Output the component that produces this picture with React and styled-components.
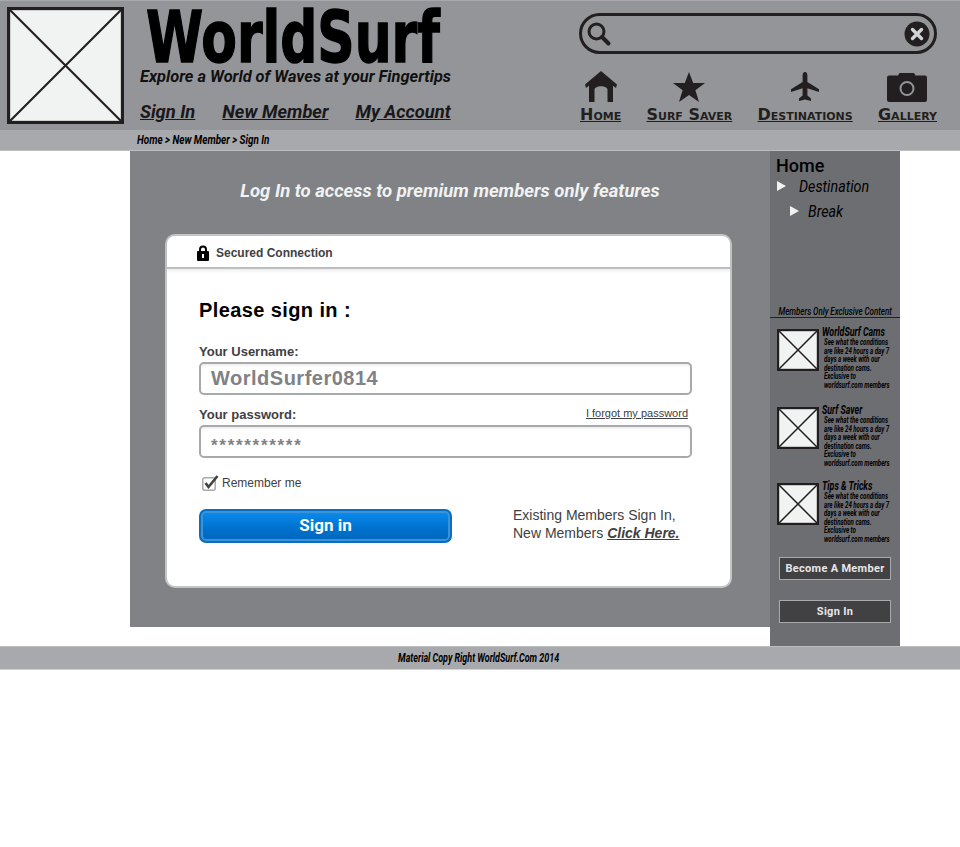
import React from "react";
import styled, { createGlobalStyle } from "styled-components";

const GlobalStyle = createGlobalStyle`
  html, body { margin: 0; padding: 0; background: #fff; }
  body { font-family: "Liberation Sans", Arial, sans-serif; }
`;

const Header = styled.header`
  height: 130px;
  background: #939598;
  border-top: 1px solid #a7a9ac;
  box-sizing: border-box;
  display: flex;
  padding: 6px 23px 0 7px;
`;

const Frame = styled.svg`
  display: block;
  flex: none;
  width: ${(p) => p.size}px;
  height: ${(p) => p.size}px;
`;

const Brand = styled.div`
  margin-left: 16px;
  width: 320px;
`;

const Logo = styled.div`
  font-family: "DejaVu Sans", sans-serif;
  font-weight: 700;
  font-size: 71px;
  line-height: 58px;
  height: 58px;
  margin: 2px 0 0 6px;
  color: #000;
  -webkit-text-stroke: 1.5px #000;
  transform: scaleX(0.73);
  transform-origin: left center;
  white-space: nowrap;
`;

const Tagline = styled.div`
  font-family: Roboto, sans-serif;
  font-style: italic;
  font-weight: 700;
  font-size: 16.4px;
  line-height: 20px;
  color: #111;
  white-space: nowrap;
`;

const TopLinks = styled.nav`
  display: flex;
  gap: 27px;
  margin-top: 13px;
`;

const TopLink = styled.a`
  font-family: Roboto, sans-serif;
  font-style: italic;
  font-weight: 700;
  font-size: 18.3px;
  line-height: 24px;
  color: #1a1718;
  text-decoration: underline;
  white-space: nowrap;
`;

const RightSide = styled.div`
  margin-left: auto;
  width: 358px;
`;

const Search = styled.div`
  height: 41px;
  margin-top: 6px;
  box-sizing: border-box;
  border: 3px solid #231f20;
  border-radius: 21px;
  display: flex;
  align-items: center;
  justify-content: space-between;
  padding: 0 4px;
`;

const IconNav = styled.nav`
  display: flex;
  justify-content: space-between;
  margin-top: 16px;
  padding-left: 1px;
`;

const IconLink = styled.a`
  display: flex;
  flex-direction: column;
  align-items: center;
  color: #231f20;
`;

const IconBox = styled.span`
  height: 32px;
  display: flex;
  align-items: flex-end;
`;

const IconLabel = styled.span`
  font-family: "DejaVu Sans", sans-serif;
  font-variant: small-caps;
  font-weight: 700;
  font-size: 16px;
  line-height: 18px;
  margin-top: 4px;
  text-decoration: underline;
  text-underline-offset: 1px;
  white-space: nowrap;
`;

const Crumbs = styled.div`
  height: 21px;
  box-sizing: border-box;
  background: #a7a9ac;
  border-bottom: 1px solid #bcbec0;
  padding-left: 137px;
  font-family: Roboto, sans-serif;
  font-style: italic;
  font-weight: 700;
  font-size: 12.5px;
  line-height: 20px;
  color: #000;
`;

const Squeeze = styled.span`
  display: inline-block;
  transform: scaleX(${(p) => p.x});
  transform-origin: ${(p) => p.origin || "left"} center;
  white-space: pre;
`;

const Content = styled.div`
  display: flex;
  padding-left: 130px;
`;

const Main = styled.main`
  width: 640px;
  height: 476px;
  background: #808285;
  box-sizing: border-box;
  padding: 28px 38px 0 35px;
`;

const MainTitle = styled.h1`
  margin: 0;
  text-align: center;
  font-family: Roboto, sans-serif;
  font-style: italic;
  font-weight: 700;
  font-size: 18.5px;
  line-height: 25px;
  color: #f1f2f2;
  padding-left: 3px;
`;

const Card = styled.section`
  margin-top: 30px;
  height: 354px;
  box-sizing: border-box;
  background: #fff;
  border: 2px solid #c4c5c7;
  border-radius: 10px;
`;

const CardHead = styled.div`
  height: 33px;
  box-sizing: border-box;
  border-bottom: 2px solid #bcbec0;
  box-shadow: 0 2px 3px rgba(0, 0, 0, 0.08);
  display: flex;
  align-items: center;
  gap: 7px;
  padding: 3px 0 0 30px;
  font-weight: 700;
  font-size: 12px;
  color: #414042;
`;

const CardBody = styled.div`
  padding: 29px 38px 0 32px;
`;

const SignTitle = styled.h2`
  margin: 0;
  font-size: 20px;
  line-height: 24px;
  letter-spacing: 0.4px;
  color: #000;
`;

const FieldHead = styled.div`
  display: flex;
  justify-content: space-between;
  align-items: flex-end;
  margin-top: ${(p) => p.gap}px;
  height: 17px;
  font-weight: 700;
  font-size: 13px;
  line-height: 17px;
  color: #414042;
`;

const Forgot = styled.a`
  font-weight: 400;
  font-size: 11px;
  color: #414042;
  text-decoration: underline;
  margin-right: 4px;
  padding-bottom: 1px;
`;

const Field = styled.div`
  height: 33px;
  box-sizing: border-box;
  margin-top: 2px;
  border: 2px solid #a7a9ac;
  border-radius: 5px;
  box-shadow: inset 0 2px 2px rgba(0, 0, 0, 0.06);
  padding-left: 10px;
  display: flex;
  align-items: center;
  font-weight: 700;
  font-size: 20px;
  letter-spacing: 0.5px;
  color: #808285;
`;

const Stars = styled.span`
  font-weight: 700;
  font-size: 17px;
  letter-spacing: 1.7px;
  padding-top: 8px;
`;

const Remember = styled.div`
  display: flex;
  align-items: center;
  gap: 3px;
  margin: 15px 0 0 3px;
  font-size: 12px;
  line-height: 20px;
  color: #414042;
`;

const ActionRow = styled.div`
  display: flex;
  margin-top: 16px;
`;

const BlueButton = styled.button`
  width: 253px;
  height: 34px;
  padding: 0 0 3px;
  box-sizing: border-box;
  border: 2px solid #0a6fc2;
  border-radius: 7px;
  background: linear-gradient(#0a8df0 0%, #0070cc 60%, #0067bd 100%);
  box-shadow: inset 0 0 0 2px #3d93d8;
  color: #fff;
  font-family: Roboto, sans-serif;
  font-weight: 700;
  font-size: 17px;
`;

const Existing = styled.p`
  margin: -3px 0 0 61px;
  font-size: 14px;
  line-height: 18px;
  color: #414042;
  white-space: nowrap;
`;

const ClickHere = styled.a`
  font-weight: 700;
  font-style: italic;
  text-decoration: underline;
`;

const Side = styled.aside`
  width: 130px;
  height: 495px;
  background: #6d6e71;
  padding-top: 6px;
  box-sizing: border-box;
`;

const SideHome = styled.div`
  font-family: Roboto, sans-serif;
  font-weight: 500;
  font-size: 18px;
  line-height: 18px;
  margin-bottom: -2px;
  color: #000;
  padding-left: 6px;
`;

const SideLink = styled.div`
  display: flex;
  align-items: center;
  height: 25px;
  padding-left: ${(p) => p.indent}px;
  font-family: Roboto, sans-serif;
  font-style: italic;
  font-size: 17px;
  color: #000;
`;

const Triangle = styled.span`
  width: 0;
  height: 0;
  flex: none;
  margin-right: ${(p) => p.space}px;
  border-left: 9px solid #f1f2f2;
  border-top: 5px solid transparent;
  border-bottom: 5px solid transparent;
`;

const MembersHead = styled.div`
  margin-top: 75px;
  height: 13px;
  padding-top: 6px;
  border-bottom: 1px solid #231f20;
  display: flex;
  justify-content: center;
  font-family: Roboto, sans-serif;
  font-style: italic;
  font-weight: 500;
  font-size: 11.5px;
  line-height: 15px;
  color: #000;
`;

const Promo = styled.div`
  display: flex;
  align-items: flex-start;
  height: ${(p) => p.h}px;
  padding: 0 0 0 7px;
  margin-top: ${(p) => p.top}px;
`;

const PromoText = styled.div`
  margin-left: 3px;
  width: 78px;
  margin-top: -3px;
`;

const PromoTitle = styled.div`
  font-family: Roboto, sans-serif;
  font-style: italic;
  font-weight: 700;
  font-size: 12px;
  line-height: 12px;
  color: #000;
  text-decoration: underline;
`;

const PromoBody = styled.div`
  font-family: Roboto, sans-serif;
  font-style: italic;
  font-weight: 700;
  font-size: 9px;
  line-height: 8.6px;
  color: #000;
  padding-left: 2px;
`;

const SideButton = styled.button`
  display: block;
  width: 112px;
  height: 23px;
  margin: ${(p) => p.top}px 0 0 9px;
  padding: 0;
  box-sizing: border-box;
  background: #414042;
  border: 1px solid #a7a9ac;
  color: #e6e7e8;
  font-family: Roboto, sans-serif;
  font-weight: 700;
  font-size: 11px;
  letter-spacing: 0.3px;
`;

const Footer = styled.footer`
  height: 24px;
  box-sizing: border-box;
  background: #a7a9ac;
  border-top: 1px solid #bcbec0;
  border-bottom: 1px solid #d1d3d4;
  display: flex;
  justify-content: center;
  padding-right: 3px;
  font-family: Roboto, sans-serif;
  font-style: italic;
  font-weight: 700;
  font-size: 12.5px;
  line-height: 22px;
  color: #000;
`;

const Placeholder = ({ size, stroke }) => (
  <Frame size={size} viewBox="0 0 100 100" preserveAspectRatio="none">
    <rect width="100" height="100" fill="#f1f2f2" />
    <path d="M0 0L100 100M100 0L0 100" stroke="#231f20" strokeWidth={stroke} fill="none" />
    <rect width="100" height="100" fill="none" stroke="#231f20" strokeWidth={stroke * 3} />
  </Frame>
);

const SearchIcon = () => (
  <svg width="26" height="26" viewBox="0 0 26 26">
    <circle cx="10.5" cy="10.5" r="7.5" fill="none" stroke="#231f20" strokeWidth="3" />
    <path d="M16 16l6.5 6.5" stroke="#231f20" strokeWidth="4" strokeLinecap="round" />
  </svg>
);

const ClearIcon = () => (
  <svg width="26" height="26" viewBox="0 0 26 26">
    <circle cx="13" cy="13" r="12.5" fill="#231f20" />
    <path d="M8.5 8.5l9 9M17.5 8.5l-9 9" stroke="#d1d3d4" strokeWidth="3.4" strokeLinecap="round" />
  </svg>
);

const HomeIcon = () => (
  <svg width="32" height="31" viewBox="0 0 32 31" fill="#231f20">
    <path d="M16 0L32 13.5L31 17L28 14.7V31H22.5V19C22.5 14 9.5 14 9.5 19V31H4V14.7L1 17L0 13.5Z" />
  </svg>
);

const StarIcon = () => (
  <svg width="32" height="30" viewBox="0 0 32 30" fill="#231f20">
    <path d="M16 0l4.2 11.1H32l-9.6 7.2 3.6 11.7L16 22.9 6 30l3.6-11.7L0 11.1h11.800z" />
  </svg>
);

const PlaneIcon = () => (
  <svg width="28" height="30" viewBox="0 0 28 30" fill="#231f20">
    <path d="M14 0c1.6 0 2.4 1.6 2.4 3.4V10L28 17.2V20l-11.6-3.8v7.2l3.6 3V29l-6-1.6L8 29v-2.6l3.6-3v-7.2L0 20v-2.8L11.6 10V3.4C11.6 1.6 12.4 0 14 0z" />
  </svg>
);

const CameraIcon = () => (
  <svg width="40" height="30" viewBox="0 0 40 30">
    <path
      d="M2 3.500H11L12.500 1H27L28.500 3.500H38A2 2 0 0 1 40 5.500V28A2 2 0 0 1 38 30H2A2 2 0 0 1 0 28V5.500A2 2 0 0 1 2 3.500Z"
      fill="#231f20"
    />
    <circle cx="20" cy="16.500" r="6.500" fill="none" stroke="#939598" strokeWidth="2" />
  </svg>
);

const LockIcon = () => (
  <svg width="12" height="16" viewBox="0 0 12 16">
    <path d="M3 7V4.500a3 3 0 0 1 6 0V7" fill="none" stroke="#000" strokeWidth="2" />
    <rect y="6" width="12" height="10" rx="1" fill="#000" />
    <rect x="5" y="9" width="2" height="4" fill="#fff" />
  </svg>
);

const CheckIcon = () => (
  <svg width="17" height="16" viewBox="0 0 17 16">
    <rect x="0.750" y="2.750" width="12.500" height="12.500" rx="2" fill="#fff" stroke="#a7a9ac" strokeWidth="1.500" />
    <path d="M3.500 8l3 4L15.500 1" fill="none" stroke="#414042" strokeWidth="2.600" />
  </svg>
);

const iconLinks = [
  { label: "Home", icon: <HomeIcon /> },
  { label: "Surf Saver", icon: <StarIcon /> },
  { label: "Destinations", icon: <PlaneIcon /> },
  { label: "Gallery", icon: <CameraIcon /> },
];

const promoCopy = "See what the conditions\nare like 24 hours a day 7\ndays a week with our\ndestination cams.\nExclusive to\nworldsurf.com members";

const promos = [
  { title: "WorldSurf Cams", top: 11, h: 78 },
  { title: "Surf Saver", top: 0, h: 76 },
  { title: "Tips & Tricks", top: 0, h: 74 },
];

const App = () => (
  <>
    <GlobalStyle />
    <Header>
      <Placeholder size={117} stroke={1.8} />
      <Brand>
        <Logo>WorldSurf</Logo>
        <Tagline>Explore a World of Waves at your Fingertips</Tagline>
        <TopLinks>
          <TopLink>Sign In</TopLink>
          <TopLink>New Member</TopLink>
          <TopLink>My Account</TopLink>
        </TopLinks>
      </Brand>
      <RightSide>
        <Search>
          <SearchIcon />
          <ClearIcon />
        </Search>
        <IconNav>
          {iconLinks.map((l) => (
            <IconLink key={l.label}>
              <IconBox>{l.icon}</IconBox>
              <IconLabel>{l.label}</IconLabel>
            </IconLink>
          ))}
        </IconNav>
      </RightSide>
    </Header>
    <Crumbs>
      <Squeeze x={0.79}>Home &gt; New Member &gt; Sign In</Squeeze>
    </Crumbs>
    <Content>
      <Main>
        <MainTitle>Log In to access to premium members only features</MainTitle>
        <Card>
          <CardHead>
            <LockIcon />
            Secured Connection
          </CardHead>
          <CardBody>
            <SignTitle>Please sign in :</SignTitle>
            <FieldHead gap={21}>Your Username:</FieldHead>
            <Field>WorldSurfer0814</Field>
            <FieldHead gap={11}>
              Your password:
              <Forgot>I forgot my password</Forgot>
            </FieldHead>
            <Field>
              <Stars>***********</Stars>
            </Field>
            <Remember>
              <CheckIcon />
              Remember me
            </Remember>
            <ActionRow>
              <BlueButton>Sign in</BlueButton>
              <Existing>
                Existing Members Sign In,
                <br />
                New Members <ClickHere>Click Here.</ClickHere>
              </Existing>
            </ActionRow>
          </CardBody>
        </Card>
      </Main>
      <Side>
        <SideHome>Home</SideHome>
        <SideLink indent={7}>
          <Triangle space={13} />
          <Squeeze x={0.84}>Destination</Squeeze>
        </SideLink>
        <SideLink indent={20}>
          <Triangle space={9} />
          <Squeeze x={0.84}>Break</Squeeze>
        </SideLink>
        <MembersHead>
          <Squeeze x={0.69} origin="center">Members Only Exclusive Content</Squeeze>
        </MembersHead>
        {promos.map((p) => (
          <Promo key={p.title} top={p.top} h={p.h}>
            <Placeholder size={42} stroke={3.5} />
            <PromoText>
              <PromoTitle>
                <Squeeze x={0.735}>{p.title}</Squeeze>
              </PromoTitle>
              <PromoBody>
                <Squeeze x={0.68}>{promoCopy}</Squeeze>
              </PromoBody>
            </PromoText>
          </Promo>
        ))}
        <SideButton top={0}>Become A Member</SideButton>
        <SideButton top={20}>Sign In</SideButton>
      </Side>
    </Content>
    <Footer>
      <Squeeze x={0.715} origin="center">Material Copy Right WorldSurf.Com 2014</Squeeze>
    </Footer>
  </>
);

export default App;
